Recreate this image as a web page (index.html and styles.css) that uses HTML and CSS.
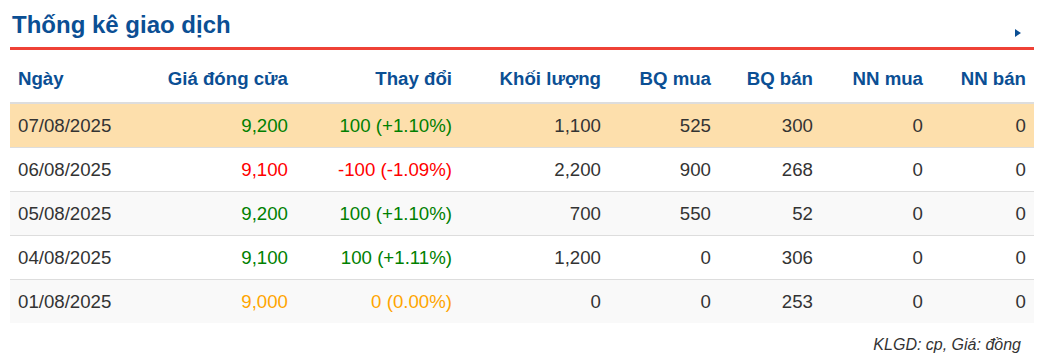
FILE: index.html
```html
<!DOCTYPE html>
<html lang="vi">
<head>
<meta charset="utf-8">
<title>Thống kê giao dịch</title>
<link rel="stylesheet" href="styles.css">
</head>
<body>
<div class="panel">
  <div class="panel-head">
    <h2 class="panel-title">Thống kê giao dịch</h2>
    <span class="more-arrow"></span>
  </div>
  <table class="stats">
    <colgroup>
      <col class="c-date"><col class="c-close"><col class="c-change"><col class="c-vol">
      <col class="c-bqm"><col class="c-bqb"><col class="c-nnm"><col class="c-nnb">
    </colgroup>
    <thead>
      <tr>
        <th class="left">Ngày</th>
        <th>Giá đóng cửa</th>
        <th>Thay đổi</th>
        <th>Khối lượng</th>
        <th>BQ mua</th>
        <th>BQ bán</th>
        <th>NN mua</th>
        <th>NN bán</th>
      </tr>
    </thead>
    <tbody>
      <tr class="hl">
        <td class="left">07/08/2025</td>
        <td class="up">9,200</td>
        <td class="up">100 (+1.10%)</td>
        <td>1,100</td><td>525</td><td>300</td><td>0</td><td>0</td>
      </tr>
      <tr>
        <td class="left">06/08/2025</td>
        <td class="down">9,100</td>
        <td class="down">-100 (-1.09%)</td>
        <td>2,200</td><td>900</td><td>268</td><td>0</td><td>0</td>
      </tr>
      <tr class="alt">
        <td class="left">05/08/2025</td>
        <td class="up">9,200</td>
        <td class="up">100 (+1.10%)</td>
        <td>700</td><td>550</td><td>52</td><td>0</td><td>0</td>
      </tr>
      <tr>
        <td class="left">04/08/2025</td>
        <td class="up">9,100</td>
        <td class="up">100 (+1.11%)</td>
        <td>1,200</td><td>0</td><td>306</td><td>0</td><td>0</td>
      </tr>
      <tr class="alt">
        <td class="left">01/08/2025</td>
        <td class="flat">9,000</td>
        <td class="flat">0 (0.00%)</td>
        <td>0</td><td>0</td><td>253</td><td>0</td><td>0</td>
      </tr>
    </tbody>
  </table>
  <p class="note">KLGD: cp, Giá: đồng</p>
</div>
</body>
</html>
```

FILE: styles.css
```css
html, body {
  margin: 0;
  padding: 0;
  background: #fff;
}
body {
  font-family: "Liberation Sans", Arial, sans-serif;
  color: #333;
}
.panel {
  padding: 0 6px 0 10px;
}
.panel-head {
  display: flex;
  align-items: flex-end;
  justify-content: space-between;
  padding-top: 9px;
  padding-bottom: 6px;
  border-bottom: 3px solid #ef4136;
}
.panel-title {
  margin: 0;
  padding-left: 2px;
  font-size: 24px;
  line-height: 32px;
  font-weight: bold;
  color: #0b4f94;
}
.more-arrow {
  width: 0;
  height: 0;
  border-top: 4px solid transparent;
  border-bottom: 4px solid transparent;
  border-left: 6px solid #0b4f94;
  margin-right: 13px;
  margin-bottom: 4px;
}
.stats {
  width: 1024px;
  border-collapse: collapse;
  table-layout: fixed;
  font-size: 18.67px;
}
.c-date { width: 140px; }
.c-close { width: 146px; }
.c-change { width: 164px; }
.c-vol { width: 149px; }
.c-bqm { width: 110px; }
.c-bqb { width: 102px; }
.c-nnm { width: 110px; }
.c-nnb { width: 103px; }
.stats th {
  padding: 18px 8px 13px;
  line-height: 21px;
  text-align: right;
  font-weight: bold;
  color: #0b4f94;
  border-bottom: 2px solid #ddd;
  white-space: nowrap;
}
.stats td {
  height: 44px;
  padding: 0 8px;
  line-height: 21px;
  text-align: right;
  vertical-align: middle;
  border-top: 1px solid #ddd;
  white-space: nowrap;
  box-sizing: border-box;
}
.stats tbody tr:first-child td {
  border-top: none;
}
.stats .left {
  text-align: left;
}
.stats tr.hl td {
  background: #fddfac;
}
.stats tr.alt td {
  background: #f9f9f9;
}
.stats td.up { color: #008000; }
.stats td.down { color: #ff0000; }
.stats td.flat { color: #ffa500; }
.note {
  margin: 13px 13px 0 0;
  text-align: right;
  font-style: italic;
  font-size: 16px;
  line-height: 18px;
  color: #333;
}
```
